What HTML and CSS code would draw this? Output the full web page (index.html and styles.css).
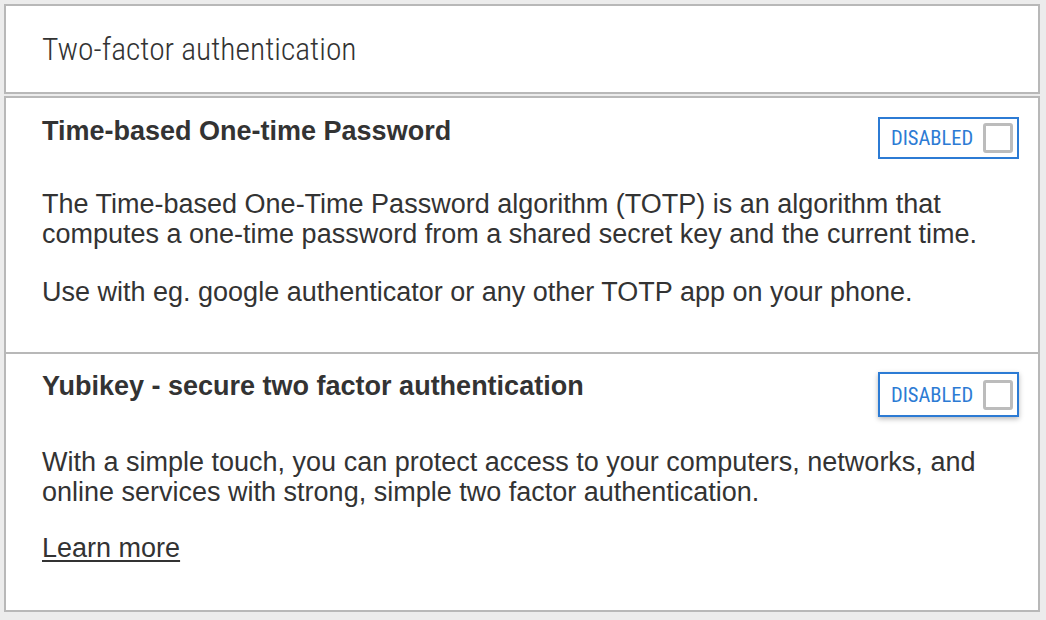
FILE: index.html
```html
<!DOCTYPE html>
<html lang="en">
<head>
<meta charset="utf-8">
<title>Two-factor authentication</title>
<link rel="stylesheet" href="styles.css">
</head>
<body>
<div class="page">
  <header class="panel panel-head">
    <h1 class="page-title">Two-factor authentication</h1>
  </header>
  <section class="panel methods">
    <article class="method">
      <div class="method-row">
        <h2 class="method-title">Time-based One-time Password</h2>
        <button class="toggle" type="button">
          <span class="toggle-label">DISABLED</span>
          <span class="toggle-box"></span>
        </button>
      </div>
      <p class="method-text">The Time-based One-Time Password algorithm (TOTP) is an algorithm that computes a one-time password from a shared secret key and the current time.</p>
      <p class="method-text">Use with eg. google authenticator or any other TOTP app on your phone.</p>
    </article>
    <article class="method method-second">
      <div class="method-row">
        <h2 class="method-title">Yubikey - secure two factor authentication</h2>
        <button class="toggle toggle-raised" type="button">
          <span class="toggle-label">DISABLED</span>
          <span class="toggle-box"></span>
        </button>
      </div>
      <p class="method-text">With a simple touch, you can protect access to your computers, networks, and online services with strong, simple two factor authentication.</p>
      <p class="method-text"><a class="learn-link" href="#">Learn more</a></p>
    </article>
  </section>
</div>
</body>
</html>
```
FILE: styles.css
```css
html, body {
  margin: 0;
  padding: 0;
}

body {
  background: #ececec;
  color: #333333;
  font-family: "Liberation Sans", Arial, sans-serif;
}

.page {
  width: 1036px;
  padding: 4px 0 0 4px;
  display: flex;
  flex-direction: column;
  gap: 2px;
}

.panel {
  background: #ffffff;
  border: 2px solid #b8b8b8;
}

.panel-head {
  height: 86px;
  display: flex;
  align-items: center;
  padding-left: 36px;
}

.page-title {
  margin: 0;
  font-family: Roboto, "Liberation Sans", sans-serif;
  font-weight: 300;
  font-stretch: 75%;
  font-size: 31.5px;
  line-height: 40px;
  color: #333333;
  position: relative;
  top: 1px;
}

.methods {
  display: flex;
  flex-direction: column;
}

.method {
  padding: 19px 19px 45px 36px;
}

.method-second {
  border-top: 2px solid #b8b8b8;
  padding: 18px 19px 47px 36px;
}

.method-row {
  display: flex;
  justify-content: space-between;
  align-items: flex-start;
  margin-bottom: 30px;
}

.method-title {
  margin: 0;
  font-size: 27px;
  line-height: 28px;
  font-weight: 700;
  color: #333333;
}

.toggle {
  box-sizing: border-box;
  height: 42px;
  width: 141px;
  display: flex;
  align-items: center;
  justify-content: space-between;
  padding: 0 4px 0 11px;
  margin: 0;
  background: #ffffff;
  border: 2px solid #2c7bd4;
  border-radius: 0;
  cursor: pointer;
}

.toggle-raised {
  height: 45px;
  box-shadow: 0 2px 5px rgba(0, 0, 0, 0.28);
}

.toggle-label {
  font-family: Roboto, "Liberation Sans", sans-serif;
  font-stretch: 75%;
  font-size: 20.5px;
  font-weight: 400;
  color: #2c7bd4;
  letter-spacing: 0;
}

.toggle-box {
  box-sizing: border-box;
  width: 30px;
  height: 30px;
  border: 3px solid #bcbcbc;
  border-radius: 3px;
  background: #ffffff;
}

.method-text {
  margin: 0 0 28px;
  font-size: 27px;
  line-height: 30px;
  color: #333333;
}

.method-second .method-text {
  margin-bottom: 26px;
}

.method .method-text:last-child {
  margin-bottom: 0;
}

.learn-link {
  color: #333333;
  text-decoration: underline;
  text-decoration-thickness: 2px;
  text-underline-offset: 3px;
}
```
